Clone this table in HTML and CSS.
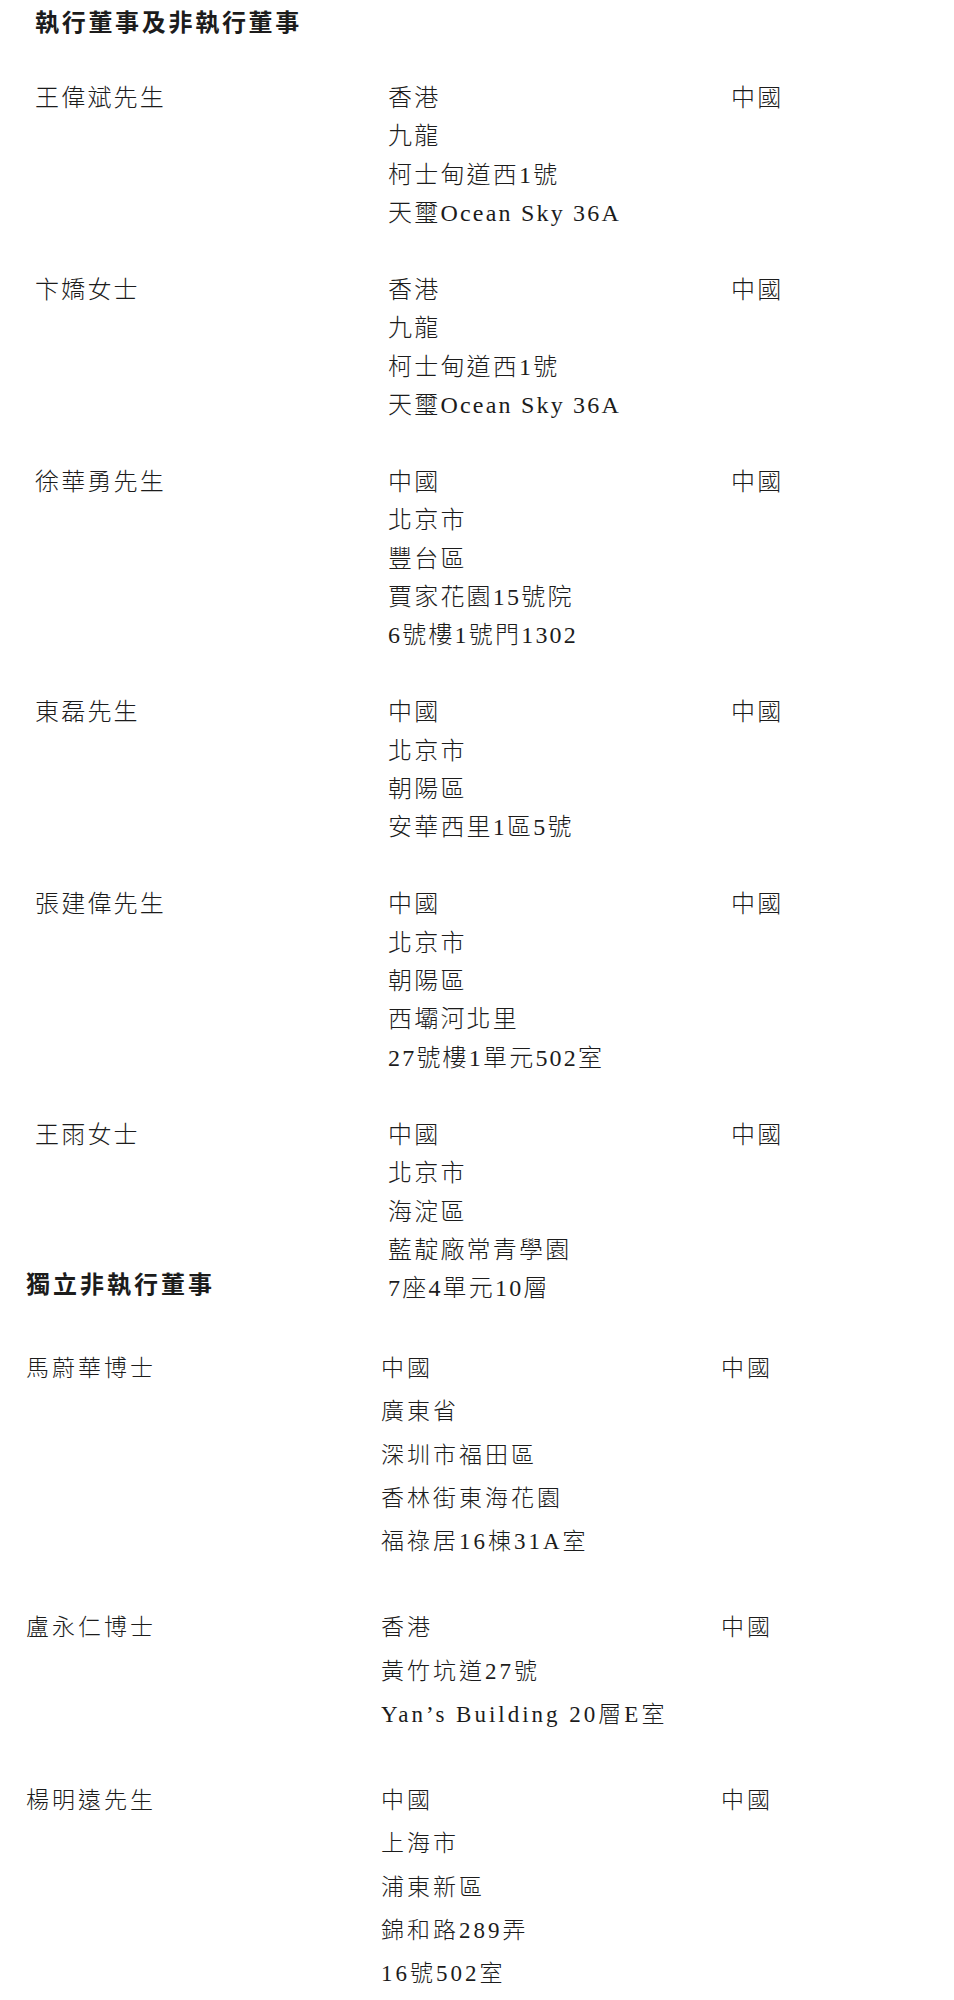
FILE: index.html
```html
<!DOCTYPE html>
<html lang="zh-Hant">
<head>
<meta charset="utf-8">
<title>董事</title>
<link rel="stylesheet" href="styles.css">
</head>
<body>
<section class="sec sec1">
  <h2 class="sec-title">執行董事及非執行董事</h2>
  <div class="row">
    <div class="name">王偉斌先生</div>
    <div class="addr"><div>香港</div><div>九龍</div><div>柯士甸道西1號</div><div>天璽Ocean Sky 36A</div></div>
    <div class="country">中國</div>
  </div>
  <div class="row">
    <div class="name">卞嬌女士</div>
    <div class="addr"><div>香港</div><div>九龍</div><div>柯士甸道西1號</div><div>天璽Ocean Sky 36A</div></div>
    <div class="country">中國</div>
  </div>
  <div class="row">
    <div class="name">徐華勇先生</div>
    <div class="addr"><div>中國</div><div>北京市</div><div>豐台區</div><div>賈家花園15號院</div><div>6號樓1號門1302</div></div>
    <div class="country">中國</div>
  </div>
  <div class="row">
    <div class="name">東磊先生</div>
    <div class="addr"><div>中國</div><div>北京市</div><div>朝陽區</div><div>安華西里1區5號</div></div>
    <div class="country">中國</div>
  </div>
  <div class="row">
    <div class="name">張建偉先生</div>
    <div class="addr"><div>中國</div><div>北京市</div><div>朝陽區</div><div>西壩河北里</div><div>27號樓1單元502室</div></div>
    <div class="country">中國</div>
  </div>
  <div class="row">
    <div class="name">王雨女士</div>
    <div class="addr"><div>中國</div><div>北京市</div><div>海淀區</div><div>藍靛廠常青學園</div><div>7座4單元10層</div></div>
    <div class="country">中國</div>
  </div>
</section>
<section class="sec sec2">
  <h2 class="sec-title">獨立非執行董事</h2>
  <div class="row">
    <div class="name">馬蔚華博士</div>
    <div class="addr"><div>中國</div><div>廣東省</div><div>深圳市福田區</div><div>香林街東海花園</div><div>福祿居16棟31A室</div></div>
    <div class="country">中國</div>
  </div>
  <div class="row">
    <div class="name">盧永仁博士</div>
    <div class="addr"><div>香港</div><div>黃竹坑道27號</div><div>Yan’s Building 20層E室</div></div>
    <div class="country">中國</div>
  </div>
  <div class="row">
    <div class="name">楊明遠先生</div>
    <div class="addr"><div>中國</div><div>上海市</div><div>浦東新區</div><div>錦和路289弄</div><div>16號502室</div></div>
    <div class="country">中國</div>
  </div>
</section>
</body>
</html>
```

FILE: styles.css
```css
html, body {
  margin: 0;
  padding: 0;
  background: #ffffff;
}

body {
  width: 954px;
  color: #1c1c1c;
  font-family: "Liberation Serif", "Noto Sans CJK TC", serif;
  font-weight: 300;
}

.sec-title {
  margin: 0;
  font-family: "Noto Sans CJK TC", "Noto Sans", sans-serif;
  font-weight: 700;
}

.row {
  display: grid;
}

/* section 1 */
.sec1 {
  padding: 2px 0 0 35px;
  font-size: 24px;
  line-height: 38.4px;
  letter-spacing: 2.2px;
}

.sec1 .sec-title {
  font-size: 24px;
  line-height: 38.4px;
  letter-spacing: 2.7px;
  margin-bottom: 38.4px;
}

.sec1 .row {
  grid-template-columns: 353px 343px auto;
  margin-bottom: 38.4px;
}

.sec1 .row:last-child {
  margin-bottom: 0;
}

/* section 2 */
.sec2 {
  margin-top: -47px;
  padding: 0 0 0 26px;
  font-size: 23px;
  line-height: 43.2px;
  letter-spacing: 3px;
}

.sec2 .sec-title {
  font-size: 24px;
  line-height: 43.2px;
  letter-spacing: 3px;
  margin-bottom: 43.2px;
}

.sec2 .row {
  grid-template-columns: 355px 340px auto;
  margin-bottom: 43.2px;
}

.sec2 .row:last-child {
  margin-bottom: 0;
}
```
